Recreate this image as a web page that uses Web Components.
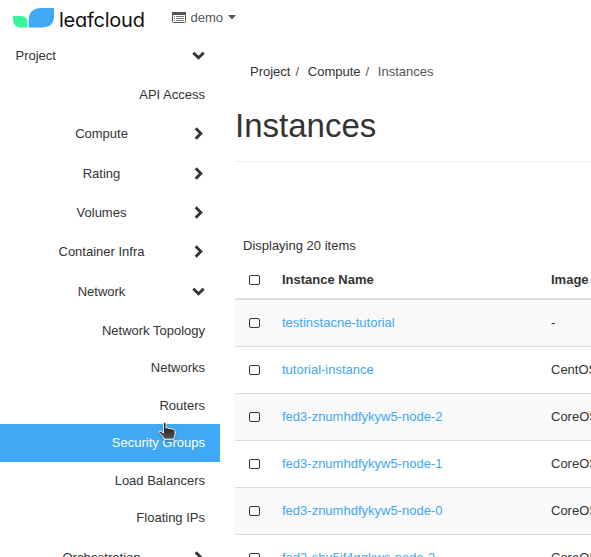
<!DOCTYPE html>
<html lang="en">
<head>
<meta charset="utf-8">
<title>Instances</title>
<style>
html,body{margin:0;height:100%;overflow:hidden;background:#fff}
body{font:13px/19px "Liberation Sans",Arial,sans-serif;color:#333}
</style>
</head>
<body>
<cloud-app></cloud-app>
<script>
const define = (name, html) => customElements.define(name, class extends HTMLElement {
  constructor() {
    super();
    this.attachShadow({mode: 'open'}).innerHTML = html;
  }
});

define('brand-logo', `<style>
:host{display:flex;align-items:flex-start;width:145px;height:36px}
svg{display:block;flex:none;margin:8px 0 0 13px}
span{font:400 20px/24px Inter,sans-serif;font-feature-settings:"cv11";letter-spacing:-.25px;color:#111;margin:8px 0 0 5px;white-space:nowrap}
</style><svg width="41" height="20" viewBox="0 0 41 20"><path d="M0 8H8Q14.5 8 14.5 14.5V19.5H8Q0 19.5 0 11Z" fill="#38f59c"/><path d="M15.7 19.5V12.5Q15.7 0 28.5 0H41V8Q41 19.5 28.5 19.5Z" fill="#40a8f5"/></svg><span>leafcloud</span>`);

define('project-picker', `<style>
:host{display:flex;align-items:center;height:35px;color:#555}
svg{display:block}.t{margin-left:4.5px;padding-bottom:1px}.c{margin-left:5px}
</style><svg width="14" height="11" viewBox="0 0 14 11"><rect x=".5" y=".5" width="13" height="10" rx="1" fill="#fff" stroke="#555"/><path d="M0 0H14V3H0Z" fill="#555"/><path d="M2 4.5H3M4 4.5H12M2 6.5H3M4 6.5H12M2 8.5H3M4 8.5H12" stroke="#777"/></svg><span class="t">demo</span><svg class="c" width="8" height="5" viewBox="0 0 8 5"><path d="M0 0H8L4 4.5Z" fill="#555"/></svg>`);

define('top-bar', `<style>
:host{display:flex;height:36px;gap:27px}
</style><brand-logo></brand-logo><project-picker></project-picker>`);

define('nav-group', `<style>
:host{display:flex;align-items:center;height:39.33px;box-sizing:border-box;padding:0 15.5px}
span{flex:1;text-align:center;padding:0 4px .4px 0}
:host([root]) span{text-align:left}
svg{display:block;flex:none;width:13px;height:13px;margin-bottom:.6px}
:host([open]) svg{transform:rotate(90deg)}
</style><span><slot></slot></span><svg viewBox="0 0 13 13"><path d="M3.7 1.3L8.8 6.5L3.7 11.7" fill="none" stroke="#333" stroke-width="2.9"/></svg>`);

define('nav-leaf', `<style>
:host{display:flex;align-items:center;justify-content:flex-end;height:37.5px;padding:0 15px}
span{padding-bottom:.4px}
:host([active]){background:#40a8f5;color:#fff}
</style><span><slot></slot></span>`);

define('side-nav', `<style>
:host{display:block;width:220px;flex:none}
.sub{padding:.6px 0 1px}
</style><nav>
<nav-group root open>Project</nav-group>
<div class="sub"><nav-leaf>API Access</nav-leaf></div>
<nav-group>Compute</nav-group><nav-group>Rating</nav-group><nav-group>Volumes</nav-group><nav-group>Container Infra</nav-group><nav-group open>Network</nav-group>
<div class="sub"><nav-leaf>Network Topology</nav-leaf><nav-leaf>Networks</nav-leaf><nav-leaf>Routers</nav-leaf><nav-leaf active>Security Groups</nav-leaf><nav-leaf>Load Balancers</nav-leaf><nav-leaf>Floating IPs</nav-leaf></div>
<nav-group>Orchestration</nav-group>
</nav>`);

define('page-head', `<style>
:host{display:block;height:126px;box-sizing:border-box;border-bottom:1px solid #eee}
ol{display:flex;list-style:none;margin:0;padding:26px 15px 0}
li+li::before{content:"/";padding:0 8.7px 0 5px;color:#555}
li:last-child{color:#555}
h1{font-weight:400;font-size:33px;line-height:37px;margin:26px 0 0}
</style><ol><li>Project</li><li>Compute</li><li>Instances</li></ol><h1>Instances</h1>`);

define('check-box', `<style>
:host{display:block;box-sizing:border-box;width:11px;height:10px;border:1px solid #333;border-radius:2px;margin-left:14px}
</style>`);

define('instance-row', `<style>
:host{display:grid;grid-template-columns:47px 269px 200px;align-items:center;height:47px;box-sizing:border-box;border-bottom:1px solid #ddd;white-space:nowrap}
:host([odd]){background:#f9f9f9}
:host([head]){height:40px;border-bottom-width:2px;font-weight:700;padding-top:2px}
span{padding-bottom:1px}
.n{color:#40a8f5}
:host([head]) .n{color:#333}
</style><check-box></check-box><span class="n"><slot name="name"></slot></span><span><slot name="image"></slot></span>`);

customElements.define('instance-table', class extends HTMLElement {
  constructor() {
    super();
    const rows = [['testinstacne-tutorial','-'],['tutorial-instance','CentOS 8'],['fed3-znumhdfykyw5-node-2','CoreOS 32'],['fed3-znumhdfykyw5-node-1','CoreOS 32'],['fed3-znumhdfykyw5-node-0','CoreOS 32'],['fed2-shu5if4gqkws-node-2','CoreOS 32']];
    const row = (attr, [name, image]) => `<instance-row ${attr}><span slot="name">${name}</span><span slot="image">${image}</span></instance-row>`;
    this.attachShadow({mode: 'open'}).innerHTML = `<style>:host{display:block}p{margin:0;padding:74px 8px 5px;height:19px}</style><p>Displaying 20 items</p>` +
      row('head', ['Instance Name', 'Image']) + rows.map((r, i) => row(i % 2 ? '' : 'odd', r)).join('');
  }
});

define('hand-cursor', `<style>
:host{position:absolute;left:157px;top:421px;width:20px;height:20px}
svg{display:block;filter:drop-shadow(0 1px 1px #0005)}
</style><svg width="20" height="20" viewBox="0 0 20 20"><defs><linearGradient id="g" x2="0" y2="1"><stop stop-color="#111"/><stop offset="1" stop-color="#555"/></linearGradient></defs><path d="M6.4 2.3Q7.7.8 9 2.3V7.1Q10.7 6.1 11.7 7.5Q13.3 6.8 14.4 8.1Q16.4 7.3 18 9.3V13.4Q17.7 15.4 17 16.8V18.2H7.3Q6.7 16.2 5 14.5L1.8 11.3Q2 9.4 4 10.2L6.4 12Z" fill="url(#g)" stroke="#fff" stroke-linejoin="round"/></svg>`);

define('cloud-app', `<style>
:host{display:block;position:relative;width:591px;height:557px;overflow:hidden}
.body{display:flex}
main{flex:1;min-width:0;margin-left:15px}
</style><top-bar></top-bar><div class="body"><side-nav></side-nav><main><page-head></page-head><instance-table></instance-table></main></div><hand-cursor></hand-cursor>`);
</script>
</body>
</html>
